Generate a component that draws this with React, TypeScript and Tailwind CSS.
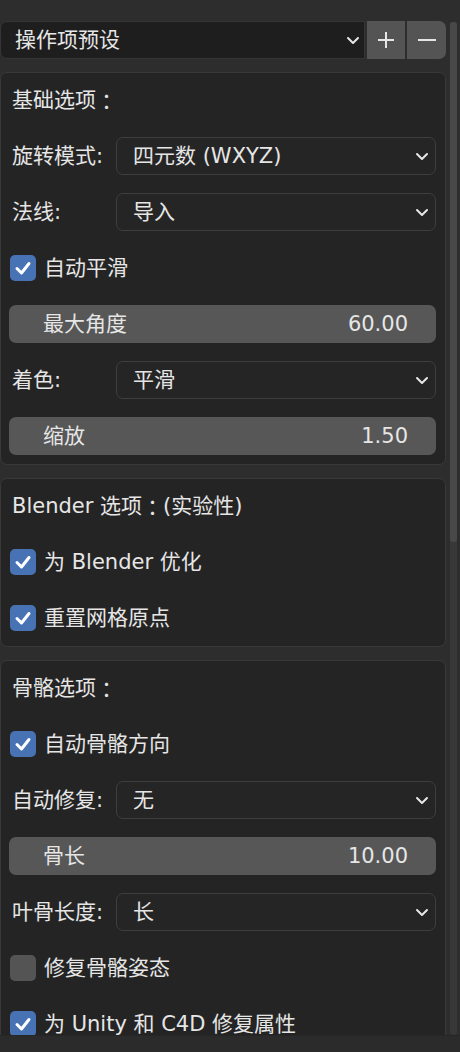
const font = { fontFamily: '"DejaVu Sans", "Noto Sans CJK SC", sans-serif' };

function Chevron() {
  return (
    <svg width="14" height="10" viewBox="0 0 14 10" className="shrink-0">
      <polyline points="2,3 7,8 12,3" fill="none" stroke="#e6e6e6" strokeWidth="2" strokeLinecap="round" strokeLinejoin="round" />
    </svg>
  );
}

function Check({ on }: { on: boolean }) {
  return (
    <div className={`w-[26px] h-[26px] rounded-[5px] flex items-center justify-center shrink-0 ${on ? "bg-[#4772b3]" : "bg-[#545454]"}`}>
      {on && (
        <svg width="20" height="20" viewBox="0 0 20 20">
          <polyline points="4,10.5 8.5,15 16,5.5" fill="none" stroke="#ffffff" strokeWidth="3" strokeLinecap="round" strokeLinejoin="round" />
        </svg>
      )}
    </div>
  );
}

// full-width colon, centred in its cell like the reference
function Colon() {
  return <span style={{ fontFamily: '"Noto Sans CJK TC", sans-serif' }}>：</span>;
}

function Heading({ children }: { children: React.ReactNode }) {
  return <div className="h-[38px] shrink-0 flex items-center pl-[3px]">{children}</div>;
}

function Select({ label, value }: { label: string; value: string }) {
  return (
    <div className="h-[38px] shrink-0 flex items-center">
      <div className="w-[107px] pl-[3px] shrink-0">{label}</div>
      <div className="flex-1 h-[38px] rounded-[7px] border border-[#3e3e3e] bg-[#252525] flex items-center pl-[16px] pr-[6px]">
        <span className="flex-1">{value}</span>
        <Chevron />
      </div>
    </div>
  );
}

function Slider({ label, value }: { label: string; value: string }) {
  return (
    <div className="h-[38px] shrink-0 rounded-[7px] bg-[#575757] flex items-center pl-[34px] pr-[28px]">
      <span className="flex-1">{label}</span>
      <span>{value}</span>
    </div>
  );
}

function Toggle({ label, on }: { label: string; on: boolean }) {
  return (
    <div className="h-[38px] shrink-0 flex items-center gap-[8px] pl-[1px]">
      <Check on={on} />
      <span>{label}</span>
    </div>
  );
}

function Panel({ children }: { children: React.ReactNode }) {
  return (
    <div className="shrink-0 rounded-[7px] border border-[#393939] bg-[#242424] pl-[8px] pr-[9px] pt-[8px] pb-[9px] flex flex-col gap-[18px]">
      {children}
    </div>
  );
}

export default function App() {
  return (
    <div className="w-[460px] h-[1052px] bg-[#2d2d2d] overflow-hidden text-[#e6e6e6] text-[21px] leading-none" style={font}>
      <div className="h-[1035px] flex overflow-hidden">
        <div className="w-[446px] shrink-0 pt-[21px] flex flex-col">
          <div className="h-[38px] shrink-0 flex gap-[2px]">
            <div className="flex-1 rounded-l-[7px] bg-[#1e1e1e] border border-[#353535] flex items-center pl-[14px] pr-[4px]">
              <span className="flex-1">操作项预设</span>
              <Chevron />
            </div>
            <div className="w-[38px] bg-[#545454] flex items-center justify-center">
              <svg width="20" height="20" viewBox="0 0 20 20">
                <path d="M10 2V18M2 10H18" stroke="#e6e6e6" strokeWidth="2" />
              </svg>
            </div>
            <div className="w-[39px] bg-[#545454] rounded-r-[7px] flex items-center justify-center">
              <svg width="22" height="20" viewBox="0 0 22 20">
                <path d="M2 10H20" stroke="#e6e6e6" strokeWidth="2" />
              </svg>
            </div>
          </div>

          <div className="mt-[13px] shrink-0 flex flex-col gap-[13px]">
            <Panel>
              <Heading>基础选项<Colon /></Heading>
              <Select label="旋转模式:" value="四元数 (WXYZ)" />
              <Select label="法线:" value="导入" />
              <Toggle label="自动平滑" on />
              <Slider label="最大角度" value="60.00" />
              <Select label="着色:" value="平滑" />
              <Slider label="缩放" value="1.50" />
            </Panel>
            <Panel>
              <Heading>Blender 选项<Colon />(实验性)</Heading>
              <Toggle label="为 Blender 优化" on />
              <Toggle label="重置网格原点" on />
            </Panel>
            <Panel>
              <Heading>骨骼选项<Colon /></Heading>
              <Toggle label="自动骨骼方向" on />
              <Select label="自动修复:" value="无" />
              <Slider label="骨长" value="10.00" />
              <Select label="叶骨长度:" value="长" />
              <Toggle label="修复骨骼姿态" on={false} />
              <Toggle label="为 Unity 和 C4D 修复属性" on />
            </Panel>
          </div>
        </div>
        <div className="flex-1 pt-[22px] pl-[4px] pr-[3px]">
          <div className="h-full rounded-[3px] bg-[#383838] flex flex-col">
            <div className="h-[520px] rounded-[3px] bg-[#484848]" />
          </div>
        </div>
      </div>
      <div className="h-[17px] bg-[#2b2b2b] border-t border-[#262626]" />
    </div>
  );
}
